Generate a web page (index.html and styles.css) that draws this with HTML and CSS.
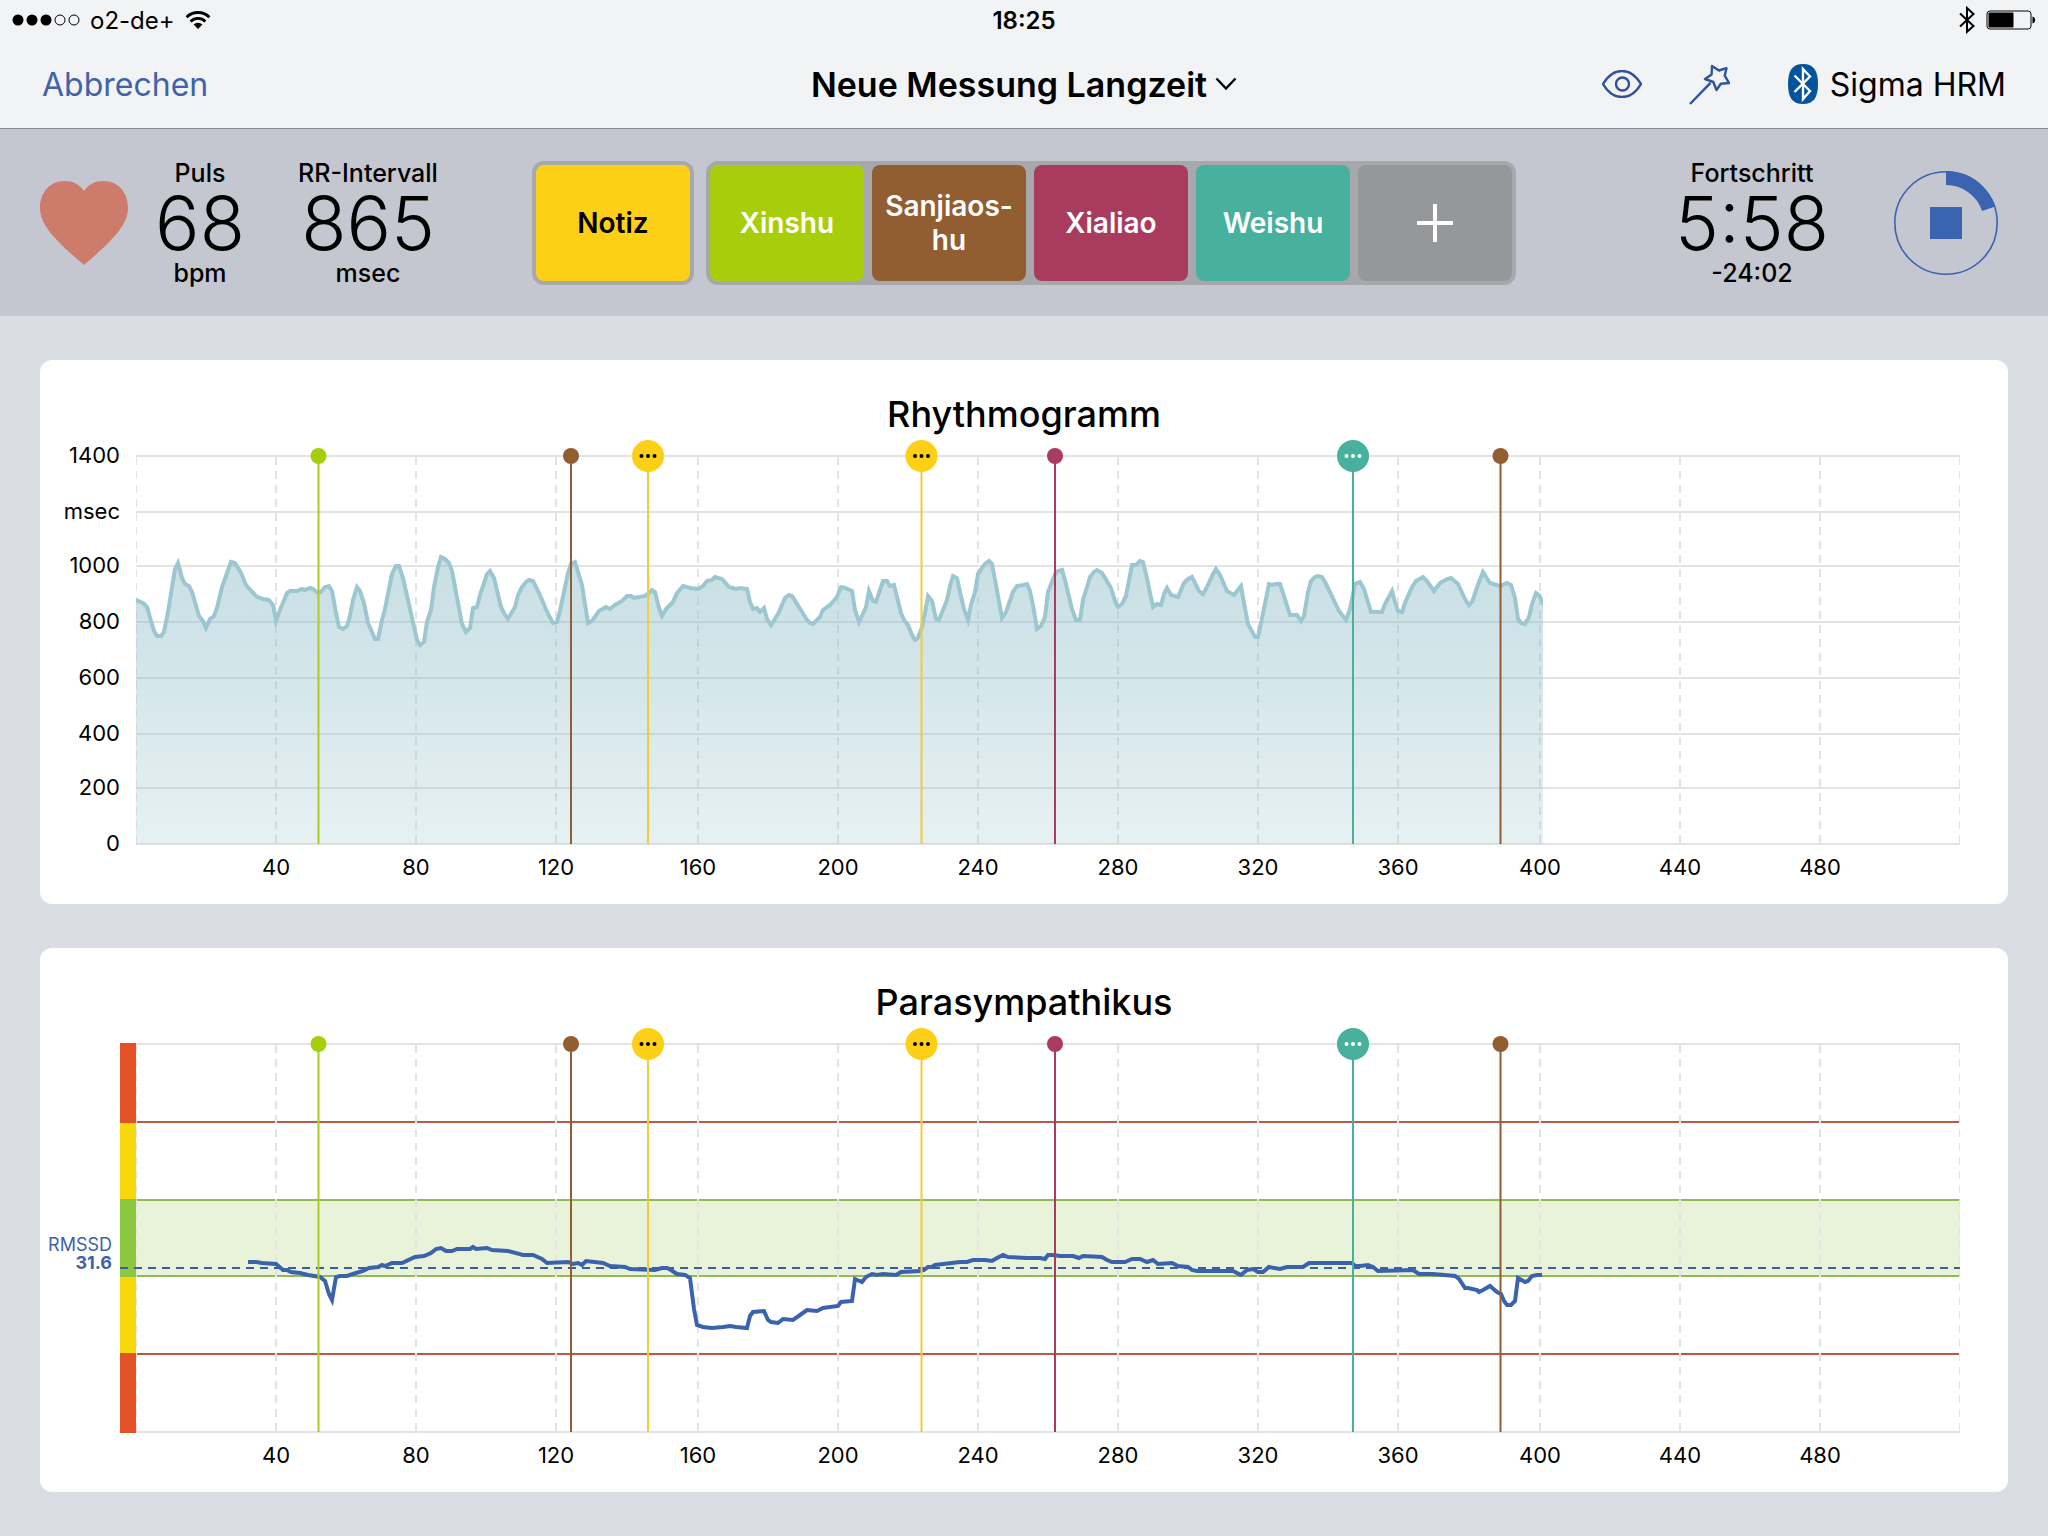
FILE: index.html
```
<!DOCTYPE html>
<html lang="de">
<head>
<meta charset="utf-8">
<meta name="viewport" content="width=device-width, initial-scale=1">
<title>Neue Messung Langzeit</title>
<link rel="stylesheet" href="styles.css">
</head>
<body>
<header class="header">
  <div class="status">
    <div class="status-left">
      <svg class="signal" width="68" height="12" viewBox="0 0 68 12" aria-hidden="true">
        <g fill="#000"><circle cx="6" cy="6" r="5.5"/><circle cx="20" cy="6" r="5.5"/><circle cx="34" cy="6" r="5.5"/></g>
        <g fill="none" stroke="#000"><circle cx="48" cy="6" r="5"/><circle cx="62" cy="6" r="5"/></g>
      </svg>
      <span>o2-de+</span>
      <svg class="wifi" width="26" height="20" viewBox="0 0 26 20" aria-hidden="true">
        <g fill="none" stroke="#000" stroke-width="2.8"><path d="M1.6 7.2a16.2 16.2 0 0 1 22.8 0"/><path d="M5.6 11.4a10.5 10.5 0 0 1 14.8 0"/></g>
        <path d="M13 19l-4.4-4.5a6.3 6.3 0 0 1 8.8 0z"/>
      </svg>
    </div>
    <time class="clock">18:25</time>
    <div class="status-right">
      <svg width="18" height="28" viewBox="0 0 18 28" fill="none" stroke="#000" stroke-width="2" aria-hidden="true"><path d="M2 7.5L15.5 20L9 25.8V2l6.5 6L2 20.5"/></svg>
      <svg width="50" height="20" viewBox="0 0 50 20" aria-hidden="true">
        <rect x="1" y="1" width="44" height="18" rx="3" fill="none" stroke="#000"/>
        <rect x="2.5" y="2.5" width="25" height="15" rx="1"/>
        <path d="M46.5 6.5c3.5.5 3.5 6.5 0 7z"/>
      </svg>
    </div>
  </div>
  <nav class="nav">
    <a class="cancel" href="#">Abbrechen</a>
    <button class="title" type="button" aria-haspopup="menu">Neue Messung Langzeit
      <svg width="22" height="14" viewBox="0 0 22 14" fill="none" stroke="#000" stroke-width="2.4" aria-hidden="true"><path d="M1.5 1.5L11 11.5l9.5-10"/></svg>
    </button>
    <div class="tools">
      <button type="button" class="tool" aria-label="Ansicht">
        <svg width="40" height="28" viewBox="0 0 40 28" fill="none" stroke="#2f519e" stroke-width="2.4" aria-hidden="true"><path d="M1 14C6 5.5 12.5 1 20 1s14 4.500 19 13c-5 8.500-11.500 13-19 13S6 22.500 1 14z"/><circle cx="20.5" cy="14" r="6.5"/></svg>
      </button>
      <button type="button" class="tool" aria-label="Assistent">
        <svg width="42" height="42" viewBox="0 0 42 42" fill="none" stroke="#2f519e" stroke-width="2.4" stroke-linejoin="round" aria-hidden="true"><path d="M24 3l7 4.500 7.500-2.300-1.800 7.500L41 20l-8.200.8L28.500 27l-3.200-8L17 16l6.600-4.500zM22.500 19.800L2 41"/></svg>
      </button>
      <button type="button" class="device">
        <svg width="30" height="40" viewBox="0 0 30 40" aria-hidden="true"><path d="M15 0c11 0 15 7 15 20s-4 20-15 20S0 33 0 20 4 0 15 0z" fill="#00559c"/><path d="M6.5 11.5L22 27l-7 8V5l7 7.500L6.500 28" fill="none" stroke="#fff" stroke-width="2.4"/></svg>
        Sigma HRM
      </button>
    </div>
  </nav>
</header>

<section class="toolbar" aria-label="Messung">
  <div class="vitals">
    <svg class="heart" width="88" height="84" viewBox="0 0 88 84" aria-hidden="true"><path d="M44 10C49 3 55 0 63 0c15 0 25 11 25 27 0 19-20 36-44 57C20 63 0 46 0 27 0 11 10 0 25 0c8 0 14 3 19 10z" fill="#cd7c6c"/></svg>
    <div class="stat pulse"><span>Puls</span><strong>68</strong><span>bpm</span></div>
    <div class="stat"><span>RR-Intervall</span><strong>865</strong><span>msec</span></div>
  </div>
  <div class="marks">
    <div class="group"><button type="button" class="mark note">Notiz</button></div>
    <div class="group">
      <button type="button" class="mark lime">Xinshu</button>
      <button type="button" class="mark brown">Sanjiaos-<br>hu</button>
      <button type="button" class="mark berry">Xialiao</button>
      <button type="button" class="mark teal">Weishu</button>
      <button type="button" class="mark add" aria-label="Hinzufügen"><svg width="36" height="38" viewBox="0 0 36 38" stroke="#fff" stroke-width="4" aria-hidden="true"><path d="M18 0v38M0 19h36"/></svg></button>
    </div>
  </div>
  <div class="progress">
    <div class="stat"><span>Fortschritt</span><strong>5:58</strong><span>-24:02</span></div>
    <button type="button" class="stop" aria-label="Stopp">
      <svg width="104" height="104" viewBox="0 0 104 104" aria-hidden="true"><circle cx="52" cy="52" r="51.2" fill="none" stroke="#3a63b0" stroke-width="1.6"/><path d="M52 0a52 52 0 0 1 49.3 35.6l-13.2 4.4A38 38 0 0 0 52 14zM36 36h32v32H36z" fill="#3a63b0"/></svg>
    </button>
  </div>
</section>

<main class="charts">
  <section class="card">
    <h2>Rhythmogramm</h2>
    <svg class="chart" viewBox="40 436 1968 468" role="img" aria-label="Rhythmogramm">
      <defs>
        <linearGradient id="fade" x1="0" y1="560" x2="0" y2="844" gradientUnits="userSpaceOnUse">
          <stop offset="0" stop-color="#90bfca" stop-opacity=".5"/><stop offset="1" stop-color="#90bfca" stop-opacity=".22"/>
        </linearGradient>
        <clipPath id="plot"><path d="M136 440h1824v406H136z"/></clipPath>
        <clipPath id="recorded"><path d="M136 440h1407v404H136z"/></clipPath>
        <path id="columns" class="dashes" clip-path="url(#plot)" d="M136 457v387M276 457v387M416 457v387M556 457v387M698 457v387M838 457v387M978 457v387M1118 457v387M1258 457v387M1398 457v387M1540 457v387M1680 457v387M1820 457v387M1960 457v387"/>
        <g id="ticks" class="ticks">
          <text x="276" y="875">40</text><text x="416" y="875">80</text><text x="556" y="875">120</text><text x="698" y="875">160</text><text x="838" y="875">200</text><text x="978" y="875">240</text><text x="1118" y="875">280</text><text x="1258" y="875">320</text><text x="1398" y="875">360</text><text x="1540" y="875">400</text><text x="1680" y="875">440</text><text x="1820" y="875">480</text>
        </g>
        <g id="events" stroke-width="2">
          <g fill="#a8ce0b" stroke="#aecb1c"><path d="M318.5 456v388"/><circle cx="318.5" cy="456" r="8" stroke="none"/></g>
          <g fill="#925d31" stroke="#925d31"><path d="M571 456v388"/><circle cx="571" cy="456" r="8" stroke="none"/></g>
          <g fill="#fecf17" stroke="#f2cb35"><path d="M648 456v388"/><circle cx="648" cy="456" r="16" stroke="none"/></g>
          <g fill="#fecf17" stroke="#f2cb35"><path d="M921.5 456v388"/><circle cx="921.5" cy="456" r="16" stroke="none"/></g>
          <g fill="#a83b5e" stroke="#a83b5e"><path d="M1055 456v388"/><circle cx="1055" cy="456" r="8" stroke="none"/></g>
          <g fill="#47b19d" stroke="#47b19d"><path d="M1353 456v388"/><circle cx="1353" cy="456" r="16" stroke="none"/></g>
          <g fill="#925d31" stroke="#925d31"><path d="M1500.5 456v388"/><circle cx="1500.5" cy="456" r="8" stroke="none"/></g>
          <g fill="#000"><circle cx="641.5" cy="456" r="2"/><circle cx="648" cy="456" r="2"/><circle cx="654.5" cy="456" r="2"/><circle cx="915" cy="456" r="2"/><circle cx="921.5" cy="456" r="2"/><circle cx="928" cy="456" r="2"/></g>
          <g fill="#fff"><circle cx="1346.5" cy="456" r="2"/><circle cx="1353" cy="456" r="2"/><circle cx="1359.5" cy="456" r="2"/></g>
        </g>
      </defs>
      <path class="rows" d="M136 456h1824M136 512h1824M136 566h1824M136 622h1824M136 678h1824M136 734h1824M136 788h1824M136 844h1824"/>
      <use href="#columns"/>
      <path class="rr-area" fill="url(#fade)" clip-path="url(#recorded)" d="M136 600L143 603 147 607 151 621 154 631 157 636 161 636 164 632 168 612 175 569 178 563 182 578 185 584 189 586 192 592 199 616 203 621 206 628 210 619 214 616 217 608 222 587 231 562 235 563 241 573 246 585 257 597 263 599 269 600 273 605 276 621 280 610 287 593 290 591 297 591 302 589 305 590 310 588 313 589 318 593 321 592 325 587 329 586 332 591 336 613 339 627 343 629 347 626 350 616 353 600 357 587 360 591 364 603 368 623 375 639 378 639 382 620 385 609 392 574 396 566 399 566 403 578 417 640 420 645 424 642 427 622 431 610 434 587 438 567 441 557 445 559 449 563 452 571 462 624 466 632 470 628 473 608 477 607 480 595 487 574 490 571 494 578 501 607 505 615 508 619 515 607 518 595 522 587 526 582 529 580 533 581 540 595 547 612 553 623 557 622 560 611 568 573 571 564 575 562 578 572 582 585 588 623 592 621 599 611 606 607 610 609 615 605 622 601 627 596 631 596 634 598 645 596 652 590 655 592 659 608 662 616 666 609 673 602 677 593 683 586 690 588 698 589 703 586 707 581 712 580 715 577 722 579 729 587 736 589 740 588 747 589 750 602 753 609 757 608 760 612 764 608 767 619 771 625 778 614 785 598 789 595 792 596 799 607 807 620 810 623 813 624 820 617 823 610 830 605 837 597 841 587 845 588 852 591 855 610 859 622 862 616 866 607 869 591 873 601 876 602 883 581 887 581 890 586 894 585 897 597 901 613 904 620 908 625 912 635 915 640 918 638 922 627 925 613 928 596 932 601 936 619 939 620 947 600 950 586 953 576 957 578 960 592 964 609 968 620 971 605 975 592 978 574 982 568 985 564 989 561 992 564 996 585 1002 618 1006 612 1013 592 1017 586 1023 585 1027 584 1030 591 1033 605 1037 629 1041 626 1045 617 1048 592 1055 574 1058 571 1062 570 1065 580 1072 609 1076 620 1080 620 1083 600 1087 587 1090 577 1094 572 1097 570 1102 573 1111 588 1115 601 1118 607 1122 604 1126 596 1132 565 1136 565 1140 561 1143 562 1146 574 1153 607 1157 604 1161 605 1164 594 1167 588 1171 595 1178 597 1184 583 1188 579 1192 577 1195 583 1199 591 1203 594 1206 589 1213 574 1216 569 1220 575 1227 591 1234 595 1241 586 1244 603 1248 624 1255 637 1258 637 1261 623 1269 584 1272 585 1276 584 1280 584 1283 593 1290 615 1297 615 1301 621 1304 616 1308 592 1311 581 1315 577 1318 576 1322 577 1325 582 1329 590 1339 611 1346 620 1350 609 1355 584 1360 582 1364 589 1371 612 1378 612 1382 612 1385 604 1392 591 1395 602 1398 611 1402 612 1405 603 1412 587 1416 581 1423 577 1427 581 1434 591 1440 583 1447 579 1451 578 1458 584 1465 599 1469 605 1472 602 1479 582 1483 572 1490 583 1500 586 1507 583 1511 585 1515 598 1518 619 1521 623 1525 624 1529 617 1532 604 1536 593 1539 595 1543 603L1550 610V850H130V598z"/>
      <use href="#events"/>
      <use href="#ticks"/>
      <g class="ticks scale">
        <text x="120" y="463">1400</text><text x="120" y="519">msec</text><text x="120" y="573">1000</text><text x="120" y="629">800</text><text x="120" y="685">600</text><text x="120" y="741">400</text><text x="120" y="795">200</text><text x="120" y="851">0</text>
      </g>
    </svg>
  </section>

  <section class="card">
    <h2>Parasympathikus</h2>
    <svg class="chart" viewBox="40 436 1968 468" role="img" aria-label="Parasympathikus">
      <path d="M136 612h1824v76H136z" fill="#e9f3da"/>
      <path class="rows" d="M136 456h1824M136 844h1824"/>
      <g fill="none" stroke-width="2">
        <path d="M136 534h1824M136 766h1824" stroke="#b85c43"/>
        <path d="M136 612h1824M136 688h1824" stroke="#8ebb54"/>
      </g>
      <path d="M120 455h16v390h-16z" fill="#e35127"/>
      <path d="M120 535h16v230h-16z" fill="#f5d90b"/>
      <path d="M120 611h16v78h-16z" fill="#8dc63f"/>
      <path d="M120 680h1840" fill="none" stroke="#3a5da5" stroke-width="2" stroke-dasharray="8 6"/>
      <use href="#columns"/>
      <path class="rmssd-line" d="M248 674L256 674 262 675 276 676 283 682 287 682 291 684 300 685 308 687 320 689 325 693 329 706 332 712 336 689 340 688 347 688 356 685 363 683 369 680 378 679 382 677 385 678 392 675 402 675 415 669 424 668 431 665 436 661 441 660 446 663 452 663 457 661 470 661 473 659 476 661 487 660 492 662 508 663 523 667 533 667 542 671 547 675 568 674 573 676 578 675 582 677 586 673 603 675 610 678 625 679 630 681 655 682 662 680 667 680 671 682 677 686 685 687 690 690 694 721 697 737 703 739 712 740 723 739 730 738 736 739 747 740 750 728 753 724 764 723 768 732 771 734 778 735 783 731 793 732 800 727 807 722 817 723 823 720 838 718 841 714 852 713 855 691 862 694 866 689 872 686 877 687 883 686 896 687 901 684 920 683 924 682 928 679 932 679 935 677 960 674 967 674 973 672 985 672 992 673 997 670 1003 667 1008 669 1027 670 1040 670 1045 671 1048 667 1053 667 1060 668 1073 668 1079 670 1083 668 1102 669 1107 672 1112 674 1125 674 1132 671 1140 671 1147 674 1153 672 1158 676 1172 675 1178 678 1188 679 1192 682 1197 683 1233 683 1237 685 1241 687 1247 682 1253 681 1258 684 1263 684 1269 679 1280 681 1287 679 1303 679 1309 675 1352 675 1355 678 1360 678 1368 677 1373 679 1378 683 1413 682 1419 686 1433 686 1455 688 1459 691 1465 700 1468 700 1477 702 1479 704 1483 702 1490 698 1497 704 1501 706 1504 713 1507 717 1511 717 1515 713 1518 690 1525 694 1528 693 1532 688 1537 687 1542 687"/>
      <use href="#events"/>
      <use href="#ticks"/>
      <g class="rmssd"><text x="112" y="663">RMSSD</text><text class="value" x="112" y="681">31.6</text></g>
    </svg>
  </section>
</main>
</body>
</html>
```
FILE: styles.css
```
* { box-sizing: border-box; }

body {
  margin: 0;
  background: #dadde4;
  color: #000;
  font-family: Inter, "Liberation Sans", sans-serif;
}

button {
  padding: 0;
  border: 0;
  background: none;
  color: inherit;
  font: inherit;
  cursor: pointer;
}

svg { display: block; flex: none; }

.header {
  background: #f2f3f5;
  border-bottom: 1px solid #8c8d92;
}

.status,
.nav,
.toolbar {
  display: grid;
  grid-template-columns: 1fr auto 1fr;
  align-items: center;
}

.status {
  height: 40px;
  padding: 0 12px;
  font-size: 24px;
}

.status-left,
.status-right {
  display: flex;
  align-items: center;
  gap: 10px;
}

.status-right { justify-content: flex-end; }

.clock { font-weight: 600; }

.nav {
  height: 88px;
  padding: 0 42px;
  font-size: 32px;
}

.cancel {
  color: #4062a9;
  text-decoration: none;
}

.title {
  display: flex;
  align-items: center;
  gap: 8px;
  font-size: 34px;
  font-weight: 600;
}

.tools {
  display: flex;
  align-items: center;
  justify-content: flex-end;
  gap: 46px;
}

.device {
  display: flex;
  align-items: center;
  gap: 12px;
  margin-left: 12px;
}

.toolbar {
  min-height: 187px;
  padding: 0 40px;
  background: #c4c7cf;
}

.vitals,
.progress {
  display: flex;
  align-items: center;
}

.vitals { gap: 24px; }

.progress {
  justify-content: flex-end;
  gap: 70px;
  padding-right: 10px;
}

.stat {
  display: grid;
  width: 144px;
  justify-items: center;
  justify-content: center;
  font-size: 25px;
  font-weight: 500;
  line-height: 28px;
  white-space: nowrap;
}

.stat strong {
  font-size: 74px;
  font-weight: 300;
  line-height: 72px;
}

.pulse {
  width: 96px;
  margin-right: 24px;
}

.marks {
  display: flex;
  gap: 12px;
}

.group {
  display: flex;
  gap: 8px;
  padding: 4px;
  border-radius: 12px;
  background: #a6a8ac;
}

.mark {
  display: grid;
  place-content: center;
  width: 154px;
  height: 116px;
  border-radius: 8px;
  color: #fff;
  font-size: 28px;
  font-weight: 600;
  line-height: 34px;
}

.note { background: #fecf17; color: #000; }
.lime { background: #a8ce0b; }
.brown { background: #925d31; }
.berry { background: #a83b5e; }
.teal { background: #47b19d; }
.add { background: #96979a; }

.charts {
  display: grid;
  gap: 44px;
  padding: 44px 40px;
}

.card {
  padding-top: 32px;
  border-radius: 12px;
  background: #fff;
}

.card h2 {
  margin: 0;
  font-size: 36px;
  font-weight: 500;
  line-height: 44px;
  text-align: center;
}

.chart {
  width: 100%;
  height: auto;
}

.rows,
.dashes {
  fill: none;
  stroke: #e3e3e3;
  stroke-width: 2px;
}

.dashes { stroke-dasharray: 8px 6px; }

.rr-area,
.rmssd-line {
  stroke: #9cc7d0;
  stroke-width: 4px;
}

.rmssd-line {
  fill: none;
  stroke: #3a62ad;
}

.ticks {
  font-size: 22px;
  text-anchor: middle;
}

.scale { text-anchor: end; }

.rmssd {
  fill: #4062a9;
  font-size: 18px;
  text-anchor: end;
}

.value { font-weight: 700; }
```
